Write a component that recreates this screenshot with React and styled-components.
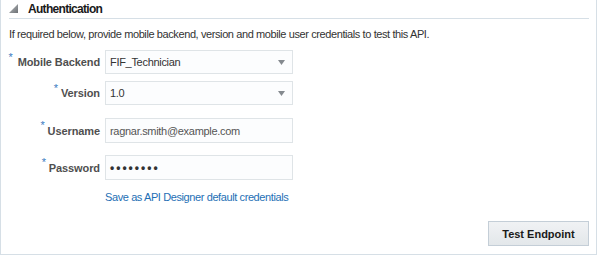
import { Fragment } from 'react';
import styled, { createGlobalStyle } from 'styled-components';

const GlobalStyle = createGlobalStyle`
  body {
    margin: 0;
    background: #ffffff;
    font-family: "Liberation Sans", Arial, sans-serif;
  }
`

const Panel = styled.div`
  width: 595px;
  height: 254px;
  border-left: 1px solid #d6dfe6;
  border-right: 1px solid #d6dfe6;
  border-bottom: 1px solid #d6dfe6;
  display: flex;
  flex-direction: column;
`

const Header = styled.div`
  display: flex;
  align-items: center;
  height: 18px;
  margin: 0 7px 0 8px;
  border-bottom: 1px solid #d6dfe6;
`

const Disclosure = styled.svg`
  width: 9px;
  height: 9px;
  margin-right: 10px;
  margin-top: -1px;
`

const Title = styled.h2`
  margin: 0;
  font-size: 12px;
  font-weight: bold;
  letter-spacing: -0.7px;
  color: #1a1a1a;
`

const Intro = styled.p`
  margin: 8px 0 0 8px;
  font-size: 11px;
  line-height: 14px;
  letter-spacing: -0.4px;
  color: #333333;
`

const Form = styled.div`
  display: grid;
  grid-template-columns: 99px 188px;
  column-gap: 5px;
  margin-top: 9px;
`

const Label = styled.label`
  display: flex;
  justify-content: flex-end;
  align-items: center;
  font-size: 11px;
  font-weight: bold;
  letter-spacing: -0.1px;
  color: #4f4f4f;
  height: ${p => p.$h}px;
  margin-top: ${p => p.$top}px;
`

const Star = styled.span`
  color: #3a7bbf;
  font-weight: normal;
  font-size: 11px;
  align-self: flex-start;
  margin-top: 1px;
  margin-right: ${p => p.$gap}px;
`

const Field = styled.div`
  box-sizing: border-box;
  height: ${p => p.$h}px;
  margin-top: ${p => p.$top}px;
  border: 1px solid #dfe4e7;
  background: #fcfdfe;
  display: flex;
  align-items: center;
  padding: 0 7px 0 4px;
  font-size: 11px;
  letter-spacing: -0.3px;
  color: #333333;
`

const Value = styled.span`
  flex: 1;
  color: ${p => (p.$muted ? '#555555' : '#333333')};
`

const Dots = styled.span`
  flex: 1;
  font-size: 12px;
  font-weight: bold;
  letter-spacing: 2px;
  color: #333333;
`

const Caret = styled.svg`
  width: 7px;
  height: 5px;
`

const LinkRow = styled.div`
  grid-column: 2;
  margin-top: 7px;
  white-space: nowrap;
`

const SaveLink = styled.a`
  font-size: 11px;
  letter-spacing: -0.4px;
  color: #1e6fb5;
  text-decoration: none;
`

const Footer = styled.div`
  display: flex;
  justify-content: flex-end;
  margin-top: auto;
  padding: 0 7px 8px 0;
`

const Button = styled.button`
  box-sizing: border-box;
  width: 101px;
  height: 25px;
  border: 1px solid #c4ced7;
  background: linear-gradient(#f0f2f4, #e3e7ea);
  font-family: "Liberation Sans", Arial, sans-serif;
  font-size: 11px;
  font-weight: bold;
  color: #1a1a1a;
  padding: 0;
`

const DropCaret = () => (
  <Caret viewBox="0 0 7 5">
    <path d="M0 0 H7 L3.5 5 Z" fill="#858a8f" />
  </Caret>
)

const rows = [
  { label: 'Mobile Backend', value: 'FIF_Technician', select: true, top: 0, h: 24, gap: 5 },
  { label: 'Version', value: '1.0', select: true, top: 7, h: 24, gap: 3 },
  { label: 'Username', value: 'ragnar.smith@example.com', top: 13, h: 25, gap: 3, muted: true },
  { label: 'Password', password: true, top: 12, h: 25, gap: 3 },
]

const App = () => {
  return (
    <>
      <GlobalStyle />
      <Panel>
        <Header>
          <Disclosure viewBox="0 0 9 9">
            <defs>
              <linearGradient id="tri" x1="0" y1="0" x2="1" y2="1">
                <stop offset="0" stopColor="#b9bcbf" />
                <stop offset="1" stopColor="#6d7175" />
              </linearGradient>
            </defs>
            <path d="M9 0 V9 H0 Z" fill="url(#tri)" />
          </Disclosure>
          <Title>Authentication</Title>
        </Header>
        <Intro>If required below, provide mobile backend, version and mobile user credentials to test this API.</Intro>
        <Form>
          {rows.map(r => (
            <Fragment key={r.label}>
              <Label $h={r.h} $top={r.top}>
                <Star $gap={r.gap}>*</Star>
                {r.label}
              </Label>
              <Field $h={r.h} $top={r.top}>
                {r.password ? (
                  <Dots>••••••••</Dots>
                ) : (
                  <Value $muted={r.muted}>{r.value}</Value>
                )}
                {r.select && <DropCaret />}
              </Field>
            </Fragment>
          ))}
          <LinkRow>
            <SaveLink href="#">Save as API Designer default credentials</SaveLink>
          </LinkRow>
        </Form>
        <Footer>
          <Button>Test Endpoint</Button>
        </Footer>
      </Panel>
    </>
  )
}

export default App;
